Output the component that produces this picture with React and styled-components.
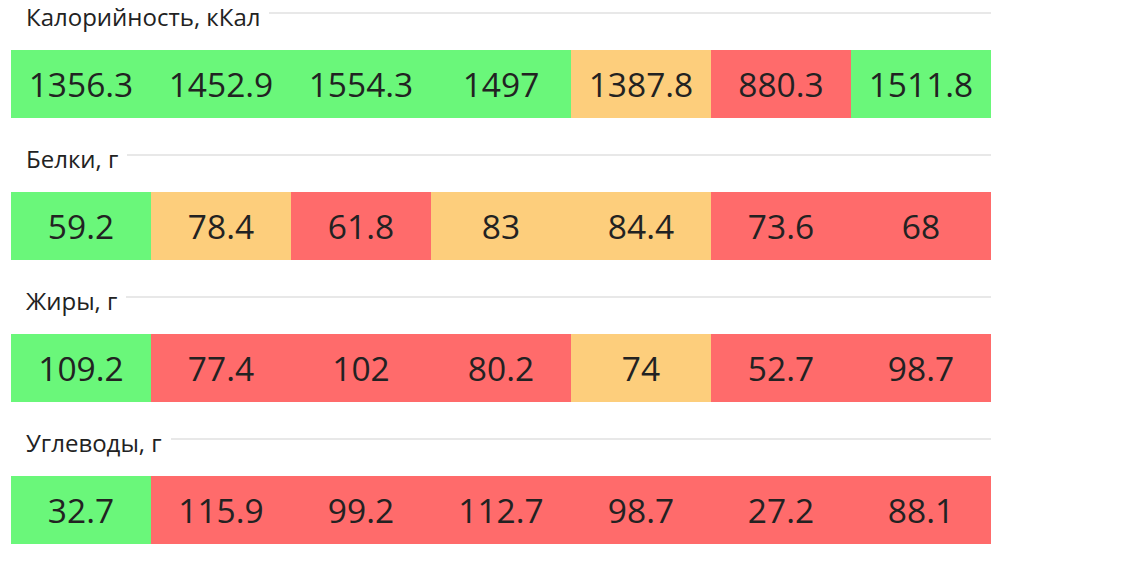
import React from "react";
import styled, { createGlobalStyle } from "styled-components";

const Global = createGlobalStyle`
  html, body { margin: 0; padding: 0; background: #fff; }
  body { font-family: "Open Sans", "Noto Sans", sans-serif; color: #222; }
`;

const Page = styled.div`
  width: 980px;
  padding-left: 11px;
  display: flex;
  flex-direction: column;
  gap: 24px;
`;

const Section = styled.section`
  display: flex;
  flex-direction: column;
`;

const Header = styled.div`
  display: flex;
  align-items: center;
  height: 33px;
  margin-bottom: 17px;
  padding-left: 15px;
`;

const Title = styled.span`
  font-size: 24px;
  line-height: 33px;
  color: #222;
  white-space: nowrap;
`;

const Rule = styled.div`
  flex: 1;
  height: 2px;
  margin-left: 9px;
  margin-top: -7px;
  background: #e8e8e8;
`;

const Row = styled.div`
  display: grid;
  grid-template-columns: repeat(7, 140px);
  height: 68px;
`;

const COLORS = {
  g: "#6af77a",
  o: "#fdce7c",
  r: "#ff6b6b",
};

const Cell = styled.div`
  display: flex;
  align-items: center;
  justify-content: center;
  background: ${(p) => COLORS[p.$tone]};
  font-size: 33.5px;
  color: #222;
`;

const data = [
  {
    title: "Калорийность, кКал",
    cells: [
      ["1356.3", "g"], ["1452.9", "g"], ["1554.3", "g"], ["1497", "g"],
      ["1387.8", "o"], ["880.3", "r"], ["1511.8", "g"],
    ],
  },
  {
    title: "Белки, г",
    cells: [
      ["59.2", "g"], ["78.4", "o"], ["61.8", "r"], ["83", "o"],
      ["84.4", "o"], ["73.6", "r"], ["68", "r"],
    ],
  },
  {
    title: "Жиры, г",
    cells: [
      ["109.2", "g"], ["77.4", "r"], ["102", "r"], ["80.2", "r"],
      ["74", "o"], ["52.7", "r"], ["98.7", "r"],
    ],
  },
  {
    title: "Углеводы, г",
    cells: [
      ["32.7", "g"], ["115.9", "r"], ["99.2", "r"], ["112.7", "r"],
      ["98.7", "r"], ["27.2", "r"], ["88.1", "r"],
    ],
  },
];

export default function App() {
  return (
    <>
      <Global />
      <Page>
        {data.map((s) => (
          <Section key={s.title}>
            <Header>
              <Title>{s.title}</Title>
              <Rule />
            </Header>
            <Row>
              {s.cells.map(([v, t], i) => (
                <Cell key={i} $tone={t}>{v}</Cell>
              ))}
            </Row>
          </Section>
        ))}
      </Page>
    </>
  );
}
